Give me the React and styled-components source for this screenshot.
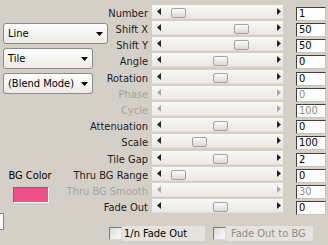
import React from 'react';
import styled, { createGlobalStyle } from 'styled-components';

const GlobalStyle = createGlobalStyle`
  html, body {
    margin: 0;
    padding: 0;
    background: #d4d0c8;
  }
  body {
    font-family: "DejaVu Sans Condensed", "Liberation Sans", Arial, sans-serif;
    font-size: 11px;
    color: #000;
  }
`;

const Panel = styled.div`
  width: 328px;
  height: 245px;
  box-sizing: border-box;
  padding-top: 5px;
  display: grid;
  grid-template-columns: 148px 135px 43px;
  grid-template-rows: 16px 16px 16px 17px 16px 16px 16px 16px 17px 16px 16px 16px 16px auto;
`;

const LeftColumn = styled.div`
  grid-column: 1;
  grid-row: 1 / 14;
  align-self: start;
  justify-self: start;
  display: flex;
  flex-direction: column;
  align-items: flex-start;
  padding-top: 18px;
`;

const Dropdown = styled.div`
  box-sizing: border-box;
  width: ${p => p.$width}px;
  height: 21px;
  margin-left: 3px;
  margin-bottom: 4px;
  padding: 0 4px;
  display: flex;
  align-items: center;
  justify-content: space-between;
  border: 1px solid #8a8a8a;
  border-radius: 3px;
  background: linear-gradient(#ffffff, #ecebe8);
  line-height: 13px;
`;

const DropArrow = () => (
  <svg width="7" height="4" viewBox="0 0 7 4">
    <polygon points="0,0 7,0 3.5,4" fill="#000" />
  </svg>
);

const ColorBlock = styled.div`
  width: 60px;
  margin-top: 71px;
  display: flex;
  flex-direction: column;
  align-items: center;
`;

const ColorLabel = styled.div`
  line-height: 13px;
  margin-bottom: 5px;
`;

const Swatch = styled.div`
  box-sizing: border-box;
  width: 36px;
  height: 16px;
  margin-left: 1px;
  background: ${p => p.$color};
  border: 1px solid;
  border-color: #6e6e6e #ffffff #ffffff #6e6e6e;
`;

const EdgeBox = styled.div`
  box-sizing: border-box;
  width: 4px;
  height: 17px;
  margin-top: 10px;
  background: #ffffff;
  border: 1px solid #8a8a8a;
  border-left: none;
`;

const Label = styled.div`
  grid-column: 1;
  grid-row: ${p => p.$row};
  justify-self: end;
  line-height: 17px;
  white-space: nowrap;
  color: ${p => (p.$disabled ? '#a5a29b' : '#1c1c1c')};
`;

const Track = styled.div`
  grid-column: 2;
  grid-row: ${p => p.$row};
  position: relative;
  box-sizing: border-box;
  margin-left: 4px;
  height: 14px;
  display: flex;
  align-items: center;
  justify-content: space-between;
  padding: 0 2px 0 5px;
  background: linear-gradient(#f8f8f6, #eae9e5);
  border-bottom: 1px solid #e0ded8;
`;

const Thumb = styled.div`
  position: absolute;
  top: 3px;
  width: 15px;
  height: 10px;
  box-sizing: border-box;
  border: 1px solid #a3a3a3;
  border-radius: 2px;
  background: linear-gradient(#fcfcfc, #d9d9d9);
`;

const Arrow = ({ dir, disabled }) => (
  <svg width="4" height="7" viewBox="0 0 4 7">
    <polygon
      points={dir === 'left' ? '4,0 4,7 0,3.5' : '0,0 0,7 4,3.5'}
      fill={disabled ? '#a8a8a8' : '#222'}
    />
  </svg>
);

const ValueBox = styled.div`
  grid-column: 3;
  grid-row: ${p => p.$row};
  align-self: start;
  box-sizing: border-box;
  margin: 2px 0 0 13px;
  width: 30px;
  height: 14px;
  padding-left: 2px;
  background: #fff;
  border: 1px solid;
  border-color: #404040 #c8c4bc #c8c4bc #404040;
  line-height: 12px;
  color: ${p => (p.$disabled ? '#8e8c87' : '#000')};
`;

const CheckRow = styled.div`
  grid-row: 14;
  grid-column: 1 / -1;
  display: flex;
  gap: 8px;
  margin-top: 6px;
  padding-left: 109px;
`;

const CheckItem = styled.div`
  display: flex;
  align-items: center;
`;

const CheckBox = styled.div`
  box-sizing: border-box;
  width: 13px;
  height: 13px;
  border: 1px solid;
  border-color: #7a7a7a #d8d8d8 #d8d8d8 #7a7a7a;
  background: linear-gradient(135deg, #d8d7d2, #ffffff);
`;

const CheckText = styled.div`
  width: ${p => p.$width}px;
  height: 15px;
  box-sizing: border-box;
  padding-left: ${p => p.$pad}px;
  line-height: 15px;
  background: #e6e3dd;
  color: ${p => (p.$disabled ? '#8e8c87' : '#000')};
  white-space: nowrap;
`;

const rows = [
  { label: 'Number', value: '1', pos: 19 },
  { label: 'Shift X', value: '50', pos: 82 },
  { label: 'Shift Y', value: '50', pos: 82 },
  { label: 'Angle', value: '0', pos: 61 },
  { label: 'Rotation', value: '0', pos: 61 },
  { label: 'Phase', value: '0', disabled: true },
  { label: 'Cycle', value: '100', disabled: true },
  { label: 'Attenuation', value: '0', pos: 61 },
  { label: 'Scale', value: '100', pos: 40 },
  { label: 'Tile Gap', value: '2', pos: 61 },
  { label: 'Thru BG Range', value: '0', pos: 19 },
  { label: 'Thru BG Smooth', value: '30', disabled: true },
  { label: 'Fade Out', value: '0', pos: 61 },
];

export default function App() {
  return (
    <>
      <GlobalStyle />
      <Panel>
        <LeftColumn>
          <Dropdown $width={105}>Line<DropArrow /></Dropdown>
          <Dropdown $width={90}>Tile<DropArrow /></Dropdown>
          <Dropdown $width={90}>(Blend Mode)<DropArrow /></Dropdown>
          <ColorBlock>
            <ColorLabel>BG Color</ColorLabel>
            <Swatch $color="#f0508a" />
          </ColorBlock>
          <EdgeBox />
        </LeftColumn>

        {rows.map((r, i) => (
          <React.Fragment key={r.label}>
            <Label $row={i + 1} $disabled={r.disabled}>{r.label}</Label>
            <Track $row={i + 1}>
              <Arrow dir="left" disabled={r.disabled} />
              {!r.disabled && <Thumb style={{ left: r.pos }} />}
              <Arrow dir="right" disabled={r.disabled} />
            </Track>
            <ValueBox $row={i + 1} $disabled={r.disabled}>{r.value}</ValueBox>
          </React.Fragment>
        ))}

        <CheckRow>
          <CheckItem>
            <CheckBox />
            <CheckText $width={83} $pad={2}>1/n Fade Out</CheckText>
          </CheckItem>
          <CheckItem>
            <CheckBox />
            <CheckText $width={87} $pad={5} $disabled>Fade Out to BG</CheckText>
          </CheckItem>
        </CheckRow>
      </Panel>
    </>
  );
}
